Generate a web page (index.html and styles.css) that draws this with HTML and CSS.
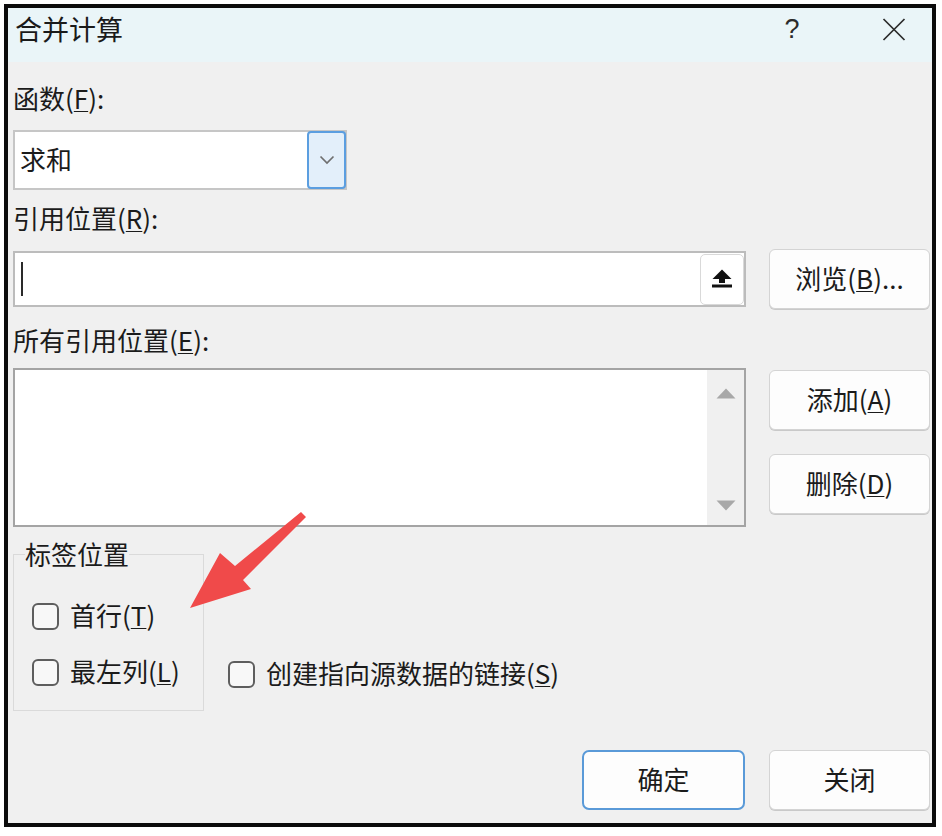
FILE: index.html
```html
<!DOCTYPE html>
<html lang="zh-CN">
<head>
<meta charset="utf-8">
<title>合并计算</title>
<link rel="stylesheet" href="styles.css">
</head>
<body>
<div class="frame">
  <div class="titlebar">
    <span class="title">合并计算</span>
    <span class="help">?</span>
    <svg class="close-x" viewBox="0 0 24 23" width="24" height="23"><path d="M1.5 1 L22.5 22 M22.5 1 L1.5 22" stroke="#2b2b2b" stroke-width="1.7" fill="none"/></svg>
  </div>
  <div class="content">
    <div class="label">函数(<u>F</u>):</div>
    <div class="combo">
      <span class="combo-text">求和</span>
      <div class="dd-btn"><svg viewBox="0 0 16 10" width="16" height="10"><polyline points="1.5,1.5 8,8 14.5,1.5" fill="none" stroke="#6f6f6f" stroke-width="1.7"/></svg></div>
    </div>
    <div class="label label-ref">引用位置(<u>R</u>):</div>
    <div class="row row-ref">
      <div class="ref-input">
        <span class="caret"></span>
        <div class="collapse-btn"><svg viewBox="0 0 22 21" width="22" height="21"><polygon points="11,0.5 1.5,10 20.5,10" fill="#111"/><rect x="8" y="9" width="6" height="5" fill="#111"/><rect x="1" y="15.5" width="20" height="3" fill="#111"/></svg></div>
      </div>
      <button class="btn">浏览(<u>B</u>)...</button>
    </div>
    <div class="label label-all">所有引用位置(<u>E</u>):</div>
    <div class="row row-list">
      <div class="listbox">
        <div class="scroll">
          <svg viewBox="0 0 20 11" width="20" height="11"><polygon points="10,0.5 19.5,10.5 0.5,10.5" fill="#a8a8a8"/></svg>
          <svg viewBox="0 0 20 11" width="20" height="11"><polygon points="0.5,0.5 19.5,0.5 10,10.5" fill="#a8a8a8"/></svg>
        </div>
      </div>
      <div class="btn-col">
        <button class="btn">添加(<u>A</u>)</button>
        <button class="btn">删除(<u>D</u>)</button>
      </div>
    </div>
    <div class="options">
      <fieldset class="group">
        <legend>标签位置</legend>
        <label class="check"><span class="box"></span><span class="txt">首行(<u>T</u>)</span></label>
        <label class="check"><span class="box"></span><span class="txt">最左列(<u>L</u>)</span></label>
      </fieldset>
      <label class="check link"><span class="box"></span><span class="txt">创建指向源数据的链接(<u>S</u>)</span></label>
    </div>
    <div class="footer">
      <button class="btn primary">确定</button>
      <button class="btn">关闭</button>
    </div>
  </div>
  <svg class="arrow" viewBox="180 500 140 115" width="140" height="115"><polygon points="190,608 220,553 235,566 301,512 306,517 243,580 251,589" fill="#f04a4a"/></svg>
</div>
</body>
</html>
```
FILE: styles.css
```css
* { box-sizing: border-box; }
html, body { margin: 0; padding: 0; background: #ffffff; }
body {
  font-family: "Noto Sans CJK SC", "Noto Sans", sans-serif;
  color: #1b1b1b;
}
u { text-decoration: underline; text-decoration-thickness: 1px; text-underline-offset: 2px; }

.frame {
  position: relative;
  margin: 4px;
  width: 932px;
  height: 823px;
  border: 4px solid #0b0b0b;
  background: #f0f0f0;
  display: flex;
  flex-direction: column;
}

.titlebar {
  height: 54px;
  flex: none;
  background: #eaf5f8;
  display: flex;
  align-items: flex-start;
  padding: 5px 26px 0 7px;
}
.title { font-size: 27px; line-height: 32px; color: #1a1a1a; }
.help {
  margin-left: auto;
  width: 30px;
  text-align: center;
  font-family: "Liberation Sans", sans-serif;
  font-size: 27px;
  line-height: 32px;
  color: #2b2b2b;
}
.close-x { margin-left: 75px; margin-top: 5px; }

.content {
  flex: 1;
  display: flex;
  flex-direction: column;
  padding: 23px 2px 0 5px;
}

.label { font-size: 26px; line-height: 26px; height: 30px; white-space: nowrap; }
.label-ref { margin-top: 15px; }
.label-all { margin-top: 18px; }

.combo {
  margin-top: 15px;
  width: 334px;
  height: 60px;
  border: 2px solid #c6c6c6;
  background: #ffffff;
  display: flex;
  align-items: center;
}
.combo-text { flex: 1; padding-left: 5px; font-size: 26px; line-height: 26px; margin-bottom: 3px; }
.dd-btn {
  align-self: stretch;
  width: 39px;
  margin: -1px -1px -1px 0;
  border: 2px solid #5b9ee0;
  border-radius: 4px;
  background: #e3effa;
  display: flex;
  align-items: center;
  justify-content: center;
}

.row { display: flex; gap: 23px; }
.row-ref { margin-top: 14px; align-items: center; }
.row-list { margin-top: 11px; align-items: flex-start; }

.ref-input {
  width: 733px;
  height: 56px;
  border: 2px solid #bcbcbc;
  background: #ffffff;
  display: flex;
  align-items: center;
  padding: 0 0 0 6px;
}
.caret { width: 2px; height: 34px; background: #2a2a2a; }
.collapse-btn {
  margin-left: auto;
  width: 44px;
  height: 51px;
  border: 1px solid #d9d9d9;
  border-radius: 5px;
  background: #ffffff;
  display: flex;
  align-items: center;
  justify-content: center;
}

.btn {
  width: 161px;
  height: 60px;
  border: 1px solid #d4d4d4;
  border-radius: 6px;
  background: #fdfdfd;
  box-shadow: 0 1px 0 #c9c9c9;
  font-family: inherit;
  font-size: 26px;
  line-height: 26px;
  color: #1b1b1b;
  padding: 0 0 3px;
  display: flex;
  align-items: center;
  justify-content: center;
}

.listbox {
  width: 733px;
  height: 159px;
  border: 2px solid #a4a4a4;
  background: #ffffff;
  display: flex;
  justify-content: flex-end;
}
.scroll {
  width: 37px;
  background: #f0f0f0;
  display: flex;
  flex-direction: column;
  align-items: center;
  justify-content: space-between;
  padding: 18px 0 14px;
}

.btn-col { margin-top: 2px; display: flex; flex-direction: column; gap: 24px; }

.options { margin-top: 13px; display: flex; align-items: flex-start; }
.group {
  margin: 0;
  width: 191px;
  border: 1px solid #dadada;
  padding: 33px 0 23px 18px;
  display: flex;
  flex-direction: column;
  gap: 26px;
}
.group legend {
  padding: 0;
  margin-left: -7px;
  font-size: 26px;
  line-height: 28px;
  color: #1b1b1b;
}

.check {
  display: flex;
  align-items: center;
  gap: 11px;
  font-size: 26px;
  height: 30px;
  white-space: nowrap;
}
.check .txt { line-height: 26px; margin-bottom: 3px; }
.box {
  width: 27px;
  height: 27px;
  border: 2px solid #5e5e5e;
  border-radius: 6px;
  background: #f8f8f8;
  flex: none;
}
.link { align-self: flex-end; margin: 0 0 22px 24px; }

.footer { margin-top: 39px; display: flex; justify-content: flex-end; gap: 24px; }
.btn.primary { width: 163px; border: 2px solid #5a9ad8; border-radius: 7px; box-shadow: none; }

.arrow { position: absolute; left: 172px; top: 492px; }
```
